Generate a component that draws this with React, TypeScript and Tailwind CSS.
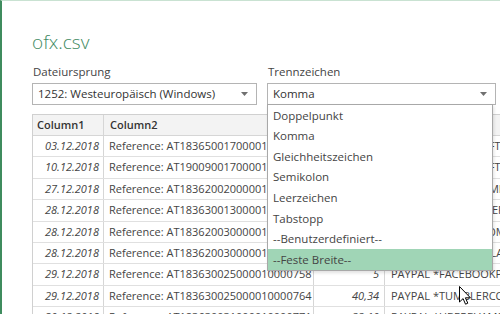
import React from "react";

const rows = [
  { date: "03.12.2018", ref: "Reference: AT183650017000010000712", amount: "12,99", text: "PAYPAL *MICROSOFTMS" },
  { date: "10.12.2018", ref: "Reference: AT190090017000010000733", amount: "9,99", text: "PAYPAL *MICROSOFTMS" },
  { date: "27.12.2018", ref: "Reference: AT183620020000010000741", amount: "4,50", text: "PAYPAL *STEAMGAMESU" },
  { date: "28.12.2018", ref: "Reference: AT183630013000010000745", amount: "19,00", text: "PAYPAL *AMAZONSERVM" },
  { date: "28.12.2018", ref: "Reference: AT183620030000010000749", amount: "7,20", text: "PAYPAL *NETFLIXCOMB" },
  { date: "28.12.2018", ref: "Reference: AT183620030000010000752", amount: "3,00", text: "PAYPAL *GOOGLEPLAYB" },
  { date: "29.12.2018", ref: "Reference: AT183630025000010000758", amount: "5", text: "PAYPAL *FACEBOOKPA" },
  { date: "29.12.2018", ref: "Reference: AT183630025000010000764", amount: "40,34", text: "PAYPAL *TUMBLERCOM" },
  { date: "30.12.2018", ref: "Reference: AT183630031000010000771", amount: "22,10", text: "PAYPAL *UBERBVAMS" },
];

const options = [
  "Doppelpunkt",
  "Komma",
  "Gleichheitszeichen",
  "Semikolon",
  "Leerzeichen",
  "Tabstopp",
  "--Benutzerdefiniert--",
  "--Feste Breite--",
];

function Caret() {
  return (
    <svg width="7" height="4" viewBox="0 0 7 4" className="shrink-0">
      <path d="M0 0h7L3.5 4z" fill="#707070" />
    </svg>
  );
}

function Select({ value, className }: { value: string; className: string }) {
  return (
    <div className={`flex h-[22px] items-center justify-between border border-[#b4b4b4] bg-white pl-[5px] pr-[8px] ${className}`}>
      <span className="text-[11.5px] leading-[20px] text-[#333]">{value}</span>
      <Caret />
    </div>
  );
}

export default function App() {
  return (
    <div
      className="relative h-[314px] w-[500px] overflow-hidden border-l-2 border-t border-l-[#3f8c5e] border-t-[#c9e2d2] bg-white"
      style={{ fontFamily: '"Open Sans", "Noto Sans", sans-serif' }}
    >
      <div className="pl-[30px] pt-[29px]">
        <h1 className="text-[19px] font-light leading-[24px] text-[#3f8a62]">ofx.csv</h1>

        <div className="mt-[11px] flex gap-[10px]">
          <div className="w-[225px]">
            <div className="pl-px text-[11.5px] leading-[14px] text-[#444]">Dateiursprung</div>
            <Select value="1252: Westeuropäisch (Windows)" className="mt-[4px] w-[225px]" />
          </div>
          <div className="w-[229px]">
            <div className="pl-px text-[11.5px] leading-[14px] text-[#444]">Trennzeichen</div>
            <Select value="Komma" className="mt-[4px] w-[229px]" />
          </div>
        </div>

        <div className="mt-[9px] w-[560px] border-l border-t border-[#d0d0d0] text-[11px] text-[#444]">
          <div className="flex h-[21px] border-b border-[#d6d6d6] bg-[#f3f3f3] font-semibold leading-[20px] text-[#333]">
            <div className="w-[71px] border-r border-[#d6d6d6] pl-[4px]">Column1</div>
            <div className="w-[210px] border-r border-[#d6d6d6] pl-[6px]">Column2</div>
            <div className="w-[71px] border-r border-[#d6d6d6] pl-[6px]">Column3</div>
            <div className="flex-1 pl-[6px]">Column4</div>
          </div>
          {rows.map((r, i) => (
            <div key={i} className="flex h-[21.4px] items-center border-b border-[#e0e0e0] leading-[20px]">
              <div className="h-full w-[71px] border-r border-[#d6d6d6] pr-[4px] text-right italic">{r.date}</div>
              <div className="h-full w-[210px] overflow-hidden whitespace-nowrap border-r border-[#d6d6d6] pl-[5px]">{r.ref}</div>
              <div className="h-full w-[71px] border-r border-[#d6d6d6] pr-[5px] text-right italic">{r.amount}</div>
              <div className="h-full flex-1 overflow-hidden whitespace-nowrap pl-[6px]">{r.text}</div>
            </div>
          ))}
        </div>
      </div>

      <div className="absolute left-[265px] top-[103px] w-[226px] border border-[#a8a8a8] bg-white shadow-[1px_2px_3px_rgba(0,0,0,0.12)]">
        {options.map((o, i) => (
          <div
            key={o}
            className={`flex h-[20.6px] items-center pl-[5px] text-[11.5px] text-[#444] ${i === options.length - 1 ? "bg-[#a0d5b6]" : ""}`}
          >
            {o}
          </div>
        ))}
      </div>

      <svg className="absolute left-[457px] top-[285px]" width="12" height="19" viewBox="0 0 12 19">
        <path d="M0.5 0.5v15.5l3.6-3.4 2.4 5.6 2.3-1-2.4-5.4h5z" fill="#fff" stroke="#000" strokeWidth="1" strokeLinejoin="round" />
      </svg>
    </div>
  );
}
